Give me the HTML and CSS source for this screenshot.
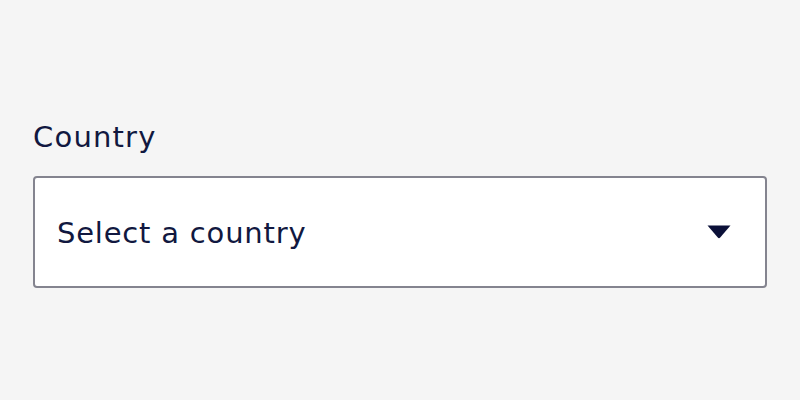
FILE: index.html
```html
<!DOCTYPE html>
<html>
<head>
<meta charset="utf-8">
<link rel="stylesheet" href="styles.css">
</head>
<body>
<div class="field">
  <label class="label" for="country">Country</label>
  <div class="select">
    <span class="placeholder">Select a country</span>
    <svg class="caret" width="24" height="14" viewBox="0 0 24 14"><path d="M0.5 0.5 H23.5 L13.2 12.6 Q12 13.8 10.8 12.6 Z" fill="#0b1038"/></svg>
  </div>
</div>
</body>
</html>
```
FILE: styles.css
```css
html, body {
  margin: 0;
  padding: 0;
  background: #f5f5f5;
}
body {
  width: 800px;
  height: 400px;
  font-family: "DejaVu Sans", "Noto Sans", sans-serif;
  color: #111840;
}
.field {
  display: flex;
  flex-direction: column;
  padding: 117px 33px 0 33px;
  gap: 19px;
}
.label {
  font-size: 29px;
  line-height: 40px;
  letter-spacing: 1.2px;
}
.select {
  box-sizing: border-box;
  height: 112px;
  background: #fff;
  border: 2px solid #84848f;
  border-radius: 4px;
  display: flex;
  align-items: center;
  justify-content: space-between;
  padding: 0 34px 0 22px;
}
.placeholder {
  font-size: 29px;
  letter-spacing: 0.8px;
  margin-top: 2px;
}
.caret {
  display: block;
}
```
